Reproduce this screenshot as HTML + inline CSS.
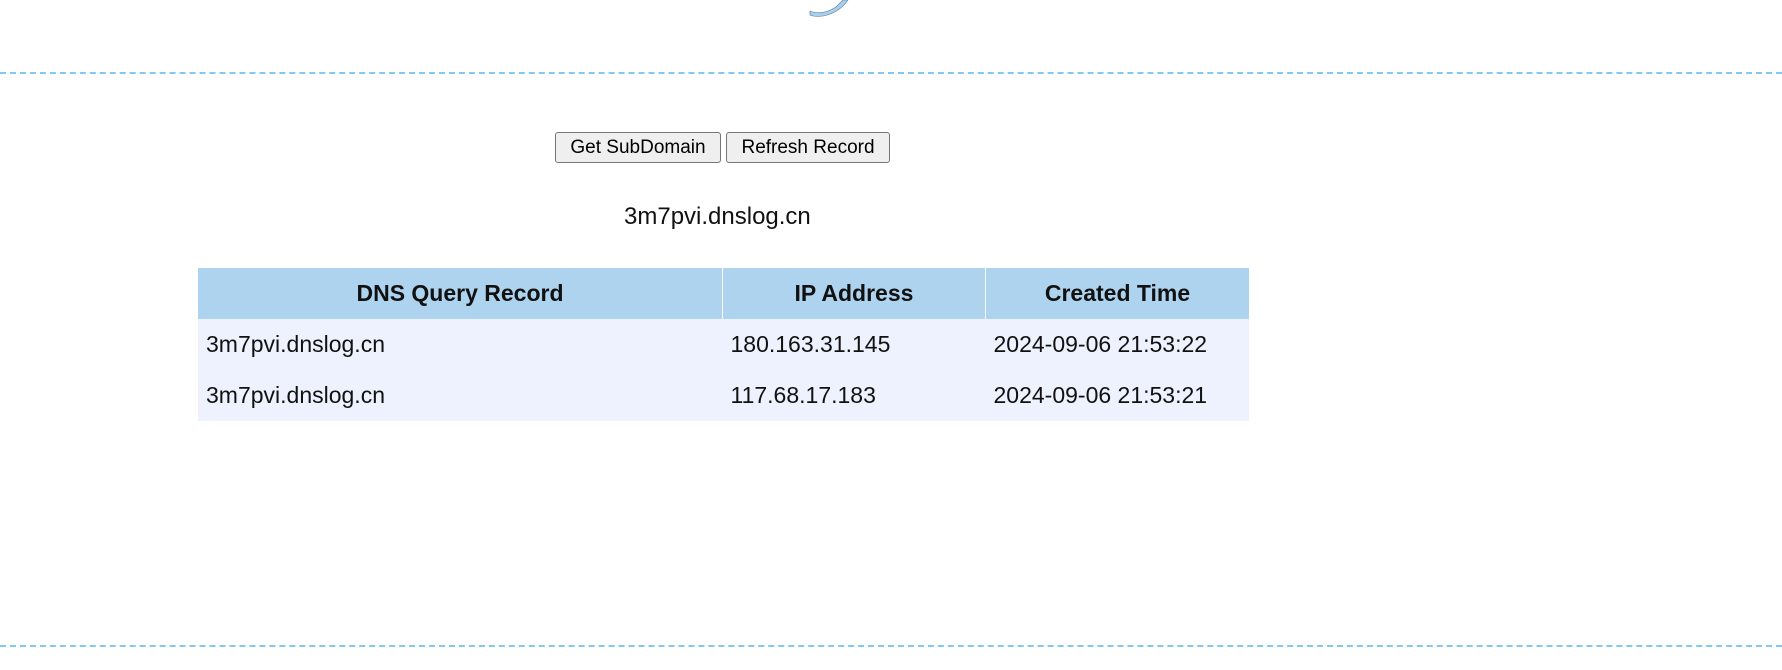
<!DOCTYPE html>
<html><head><style>
body{margin:0;background:#fff;width:1782px;height:670px;position:relative;overflow:hidden;font-family:"Liberation Sans",sans-serif;}
.dash{position:absolute;left:0;width:1782px;border-top:2px dashed #82c8f2;}
.btn{position:absolute;top:132px;height:31px;box-sizing:border-box;border:1px solid #767676;border-radius:3px;background:#efefef;font-size:19px;line-height:29px;text-align:center;color:#000;}
.sub{position:absolute;top:203px;left:624px;font-size:24px;color:#111;}
table{position:absolute;left:198px;top:268px;border-collapse:collapse;font-size:23px;color:#111;}
th{background:#aed3ee;height:51px;font-weight:bold;border-right:1px solid #fff;padding:0;}
td{background:#eef2fe;height:51px;padding:0 0 0 8px;}
</style></head><body>
<svg style="position:absolute;left:800px;top:0" width="60" height="18"><path d="M10 11 Q22 16 36 7 L43 0 L48 0 Q39 13 23 16 Q14 17 10 15Z" fill="#a7cff0" stroke="#5a7a90" stroke-width="0.6"/></svg>
<div class="dash" style="top:72px"></div>
<div class="btn" style="left:555px;width:166px">Get SubDomain</div>
<div class="btn" style="left:726px;width:164px">Refresh Record</div>
<div class="sub">3m7pvi.dnslog.cn</div>
<table>
<tr><th style="width:524px">DNS Query Record</th><th style="width:262px">IP Address</th><th style="width:263px;border-right:0">Created Time</th></tr>
<tr><td>3m7pvi.dnslog.cn</td><td>180.163.31.145</td><td>2024-09-06 21:53:22</td></tr>
<tr><td>3m7pvi.dnslog.cn</td><td>117.68.17.183</td><td>2024-09-06 21:53:21</td></tr>
</table>
<div class="dash" style="top:645px"></div>
</body></html>
